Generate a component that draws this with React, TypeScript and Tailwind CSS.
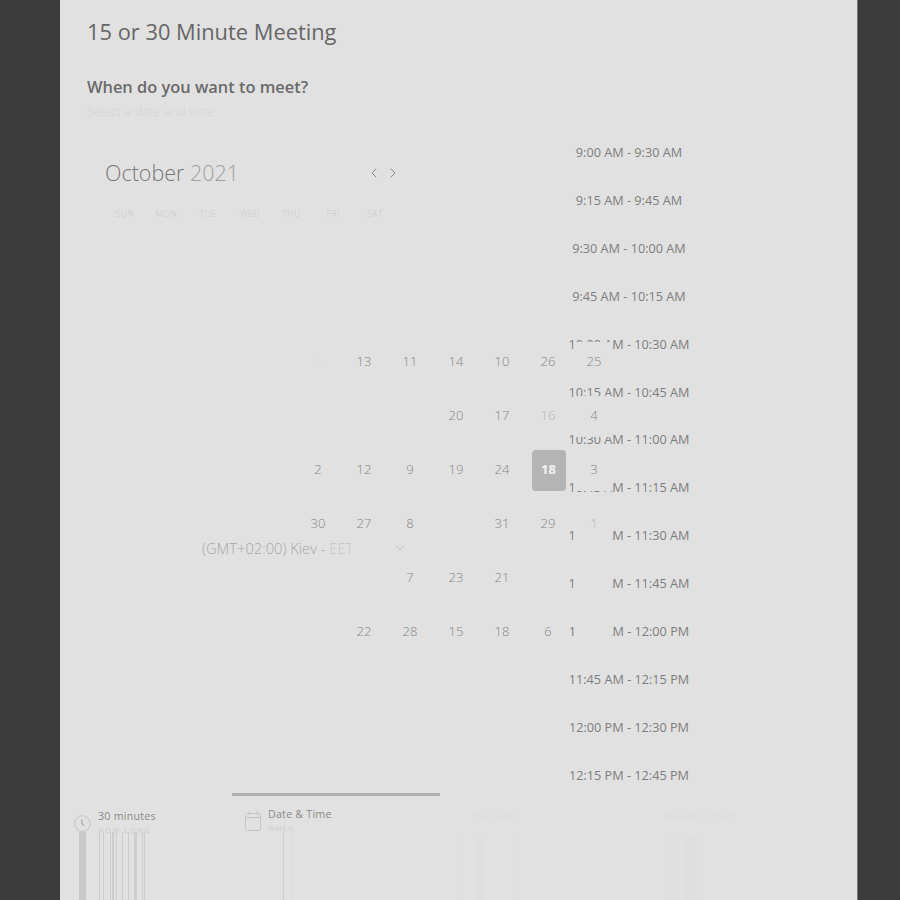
import { ChevronDown, ChevronLeft, ChevronRight } from 'lucide-react';

const WEEKDAYS = ['SUN', 'MON', 'TUE', 'WED', 'THU', 'FRI', 'SAT'];

// calendar cells in reading order, as they appear in the shot
const DAYS: Array<{ n: string; tone?: 'faint' | 'pale' | 'selected' }> = [
  { n: '5', tone: 'faint' }, { n: '13' }, { n: '11' }, { n: '14' }, { n: '10' }, { n: '26' }, { n: '25' },
  { n: '', tone: 'faint' }, { n: '', tone: 'faint' }, { n: '', tone: 'faint' }, { n: '20' }, { n: '17' }, { n: '16', tone: 'pale' }, { n: '4' },
  { n: '2' }, { n: '12' }, { n: '9' }, { n: '19' }, { n: '24' }, { n: '18', tone: 'selected' }, { n: '3' },
  { n: '30' }, { n: '27' }, { n: '8' }, { n: '', tone: 'faint' }, { n: '31' }, { n: '29' }, { n: '1', tone: 'pale' },
  { n: '', tone: 'faint' }, { n: '', tone: 'faint' }, { n: '7' }, { n: '23' }, { n: '21' }, { n: '', tone: 'faint' }, { n: '', tone: 'faint' },
  { n: '', tone: 'faint' }, { n: '22' }, { n: '28' }, { n: '15' }, { n: '18' }, { n: '6' }, { n: '', tone: 'faint' },
];

const SLOTS = [
  '9:00 AM - 9:30 AM',
  '9:15 AM - 9:45 AM',
  '9:30 AM - 10:00 AM',
  '9:45 AM - 10:15 AM',
  '10:00 AM - 10:30 AM',
  '10:15 AM - 10:45 AM',
  '10:30 AM - 11:00 AM',
  '10:45 AM - 11:15 AM',
  '11:00 AM - 11:30 AM',
  '11:15 AM - 11:45 AM',
  '11:30 AM - 12:00 PM',
  '11:45 AM - 12:15 PM',
  '12:00 PM - 12:30 PM',
  '12:15 PM - 12:45 PM',
];

function Stripes({ bars, color }: { bars: Array<[number, number, string?]>; color: string }) {
  return (
    <svg width="60" height="80" className="block">
      {bars.map(([x, w, c]) => (
        <rect key={x} x={x} y="0" width={w} height="80" fill={c ?? color} />
      ))}
    </svg>
  );
}

export default function App() {
  return (
    <div className="h-[900px] overflow-hidden bg-[#3b3b3b] pl-[60px] font-['Open_Sans',sans-serif]">
      <div className="relative h-[900px] w-[798px] overflow-hidden border-r border-[#777777] bg-[#e1e1e1]">

        {/* Heading */}
        <div className="pl-[27px] pt-[16px]">
          <h1 className="h-[32px] text-[21.85px] leading-[32px] text-[#666666]">15 or 30 Minute Meeting</h1>
          <h2 className="mt-[27px] h-[24px] text-[16.4px] font-semibold leading-[24px] text-[#6a6a6a]">When do you want to meet?</h2>
          <p className="h-[24px] text-[12.8px] font-light leading-[24px] text-[#d4d4d4]">Select a date and time</p>
        </div>

        {/* Month */}
        <div className="ml-[45px] mt-[34px] flex h-[32px] w-[320px] items-center">
          <span className="whitespace-nowrap text-[21.5px] font-light leading-[32px] text-[#777777]">October <span className="text-[#a0a0a0]">2021</span></span>
          <div className="ml-[127px] flex items-center gap-[3px] text-[#777777]">
            <ChevronLeft size={16} strokeWidth={1.25} />
            <ChevronRight size={16} strokeWidth={1.25} />
          </div>
        </div>

        {/* Weekdays */}
        <div className="ml-[44px] mt-[17px] grid h-[16px] w-[292px] grid-cols-[repeat(7,41.7px)] text-center text-[8.5px] font-light leading-[16px] tracking-[0.08em] text-[#cacaca]">
          {WEEKDAYS.map((d) => (
            <span key={d}>{d}</span>
          ))}
        </div>

        {/* Days */}
        <div className="relative z-10 ml-[235px] mt-[113px] grid w-[322px] grid-cols-[repeat(7,46px)] grid-rows-[repeat(6,54px)]">
          {DAYS.map((d, i) => (
            <div key={i} className="flex items-center justify-center">
              {d.tone === 'selected' ? (
                <div className="ml-[1px] flex h-[41px] w-[34px] items-center justify-center rounded-[4px] bg-[#b4b4b4] text-[13px] font-bold text-[#f2f2f2]">{d.n}</div>
              ) : (
                <div className={`flex h-[41px] w-[36px] items-center justify-center bg-[#e1e1e1] text-[13px] font-light ${d.tone === 'faint' ? 'text-[#dedede]' : d.tone === 'pale' ? 'text-[#b4b4b4]' : 'text-[#858585]'}`}>
                  {d.n}
                </div>
              )}
            </div>
          ))}
        </div>

        {/* Time slots, running behind the day cells */}
        <div className="absolute left-[449px] top-[128px] w-[240px] text-center text-[12.7px] leading-[48px] text-[#7d7d7d]">
          {SLOTS.map((s) => (
            <div key={s} className="h-[47.92px]">{s}</div>
          ))}
        </div>

        {/* Time zone */}
        <div className="absolute left-[142px] top-[537px] z-20 flex h-[22px] items-center">
          <span className="w-[149px] overflow-hidden whitespace-nowrap text-[14.7px] font-light leading-[22px] text-[#a6a6a6]">(GMT+02:00) Kiev - <span className="text-[#c6c6c6]">EET</span></span>
          <ChevronDown size={14} strokeWidth={1} className="ml-[42px] text-[#a6a6a6]" />
        </div>

        {/* Steps */}
        <div className="mt-[134px] flex h-[107px]">
          <div className="flex w-[172px] pl-[14px] pt-[22px]">
            <div className="flex w-[16px] flex-col items-center">
              <svg width="17" height="17" viewBox="0 0 17 17" fill="none" stroke="#c4c4c4" className="shrink-0">
                <circle cx="8.5" cy="8.5" r="7.8" />
                <path d="M7.8 4.5 L8 9 L10.5 11" stroke="#9a9a9a" />
              </svg>
              <div className="h-[80px] w-[7px] bg-[#c8c8c8]" />
            </div>
            <div className="-mt-[7px] ml-[8px]">
              <div className="h-[17px] whitespace-nowrap text-[10.7px] leading-[17px] tracking-[0.02em] text-[#8a8a8a]">30 minutes</div>
              <div className="h-[7px] whitespace-nowrap text-[7.5px] leading-[10px] tracking-[0.2em] text-[#cccccc]">HOW LONG</div>
              <Stripes color="#cdcdcd" bars={[[1, 1], [5, 1], [12, 1], [14, 2], [18, 1], [24, 1], [30, 1], [36, 3], [44, 1], [46, 1]]} />
            </div>
          </div>

          <div className="w-[208px] border-t-[3px] border-[#b2b2b2]">
            <div className="flex pl-[13px] pt-[10px]">
              <svg width="17" height="22" viewBox="0 0 17 22" fill="none" stroke="#c4c4c4" className="mt-[4px] shrink-0">
                <rect x="0.5" y="3.5" width="15" height="17" rx="2" />
                <path d="M0.5 7.5 H15.5 M4 1 V5 M12 1 V5" />
              </svg>
              <div className="ml-[6px]">
                <div className="h-[17px] whitespace-nowrap text-[10.7px] leading-[17px] tracking-[0.02em] text-[#8a8a8a]">Date &amp; Time</div>
                <div className="h-[9px] text-[7.5px] leading-[11px] tracking-[0.15em] text-[#cccccc]">WHEN</div>
                <Stripes color="#cfcfcf" bars={[[15, 1], [23, 1, '#dcdcdc']]} />
              </div>
            </div>
          </div>

          <div className="w-[208px] pl-[23px] pt-[15px]">
            <div className="h-[17px] pl-[9px] text-[13px] leading-[17px] text-[#dddddd]">Details</div>
            <div className="h-[11px]" />
            <Stripes color="#dfdfdf" bars={[[0, 1], [13, 10], [49, 1]]} />
          </div>

          <div className="pl-[16px] pt-[15px]">
            <div className="h-[17px] text-[13px] leading-[17px] text-[#dddddd]">Reservation</div>
            <div className="h-[11px]" />
            <Stripes color="#dfdfdf" bars={[[1, 1], [14, 1], [22, 11]]} />
          </div>
        </div>

      </div>
    </div>
  );
}
